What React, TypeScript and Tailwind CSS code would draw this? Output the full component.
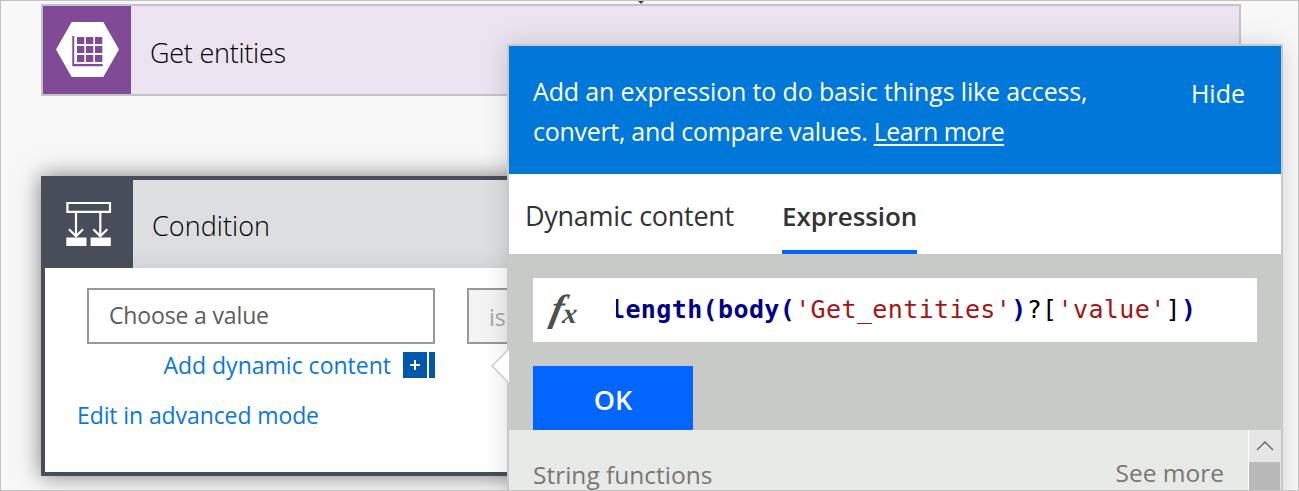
import React from "react";

function EntitiesIcon() {
  return (
    <svg width="88" height="88" viewBox="0 0 88 88" className="block shrink-0 bg-[#804a97]">
      <path d="M13 43.5 28.7 16H60.3L76 43.5 60.3 71H28.7Z" fill="#fff" />
      <path d="M29.3 30h1.9v28h28.5v2.2H29.3Z" fill="#804a97" />
      {[31, 40, 49].map((y) =>
        [34, 43, 52].map((x) => <rect key={`${x}-${y}`} x={x} y={y} width="7.3" height="7" fill="#804a97" />)
      )}
    </svg>
  );
}

function ConditionIcon() {
  return (
    <svg width="88" height="88" viewBox="0 0 88 88" fill="none" stroke="#fff" className="block shrink-0 bg-[#474e5a]">
      <path d="M22.4 23h42.6v8.9H22.4Z" strokeWidth="2.2" />
      <path d="M31 32v24M55.3 32v24M24 49.3l7 7 7-7M48.3 49.3l7 7 7-7" strokeWidth="2.2" />
      <path d="M21.3 57.5h20.2V66H21.3ZM45.6 57.5h20.2V66H45.6Z" fill="#fff" stroke="none" />
    </svg>
  );
}

function GetEntitiesCard() {
  return (
    <div className="flex h-[92px] w-[1200px] border-2 border-[#c4c4c4] bg-[#ebe3f0]">
      <EntitiesIcon />
      <div className="pt-[1px] pl-[19px] text-[27px] leading-[91px] font-[350] tracking-[-0.25px] text-black">Get entities</div>
    </div>
  );
}

function ConditionCard() {
  return (
    <div className="h-[300px] w-[1200px] border-4 border-[#474e5a] bg-white shadow-[0_0_22px_rgba(0,0,0,0.5)]">
      <div className="flex h-[88px] bg-linear-to-b from-[#dddee0] from-80% to-[#d3d4d6]">
        <ConditionIcon />
        <div className="pl-[19px] text-[27px] leading-[92px] font-[350] tracking-[0.05px] text-black">Condition</div>
      </div>
      <div className="flex gap-8 pt-5 pl-[42px]">
        <div className="w-[348px]">
          <div className="h-14 border-2 border-[#999] pl-5 text-[23px] leading-[51px] tracking-[-0.15px] text-[#5c5c5c]">Choose a value</div>
          <div className="flex items-center justify-end pt-2 text-[#0b78d8]">
            <span className="mr-[12px] text-[23px] leading-[26px]">Add dynamic content</span>
            <span className="mr-[2px] flex h-[26px] w-6 items-center justify-center bg-[#0058ad]">
              <svg width="12" height="12" viewBox="0 0 12 12" stroke="#fff" strokeWidth="2">
                <path d="M6 1v10M1 6h10" />
              </svg>
            </span>
            <span className="h-[26px] w-1.5 bg-[#0058ad]" />
          </div>
        </div>
        <div className="h-14 w-[300px] border-2 border-[#999] bg-[#f3f3f3] pl-5 text-[23px] leading-[55px] text-[#a6a6a6]">is equal to</div>
      </div>
      <div className="pt-[17px] pl-[32px] text-[23px] leading-10 tracking-[-0.1px] text-[#0b78d8]">Edit in advanced mode</div>
    </div>
  );
}

function ExpressionPanel() {
  return (
    <div className="absolute top-[43px] left-[506px] h-[460px] w-[776px] border-2 border-[#c8c8c8] bg-white shadow-[0_0_24px_rgba(0,0,0,0.15)]">
      <svg width="19" height="36" viewBox="0 0 19 36" className="absolute top-[302px] left-[-18px]">
        <path d="M18 1 1 18l17 17Z" fill="#fff" />
        <path d="M17 2 1 18l16 16" fill="none" stroke="#c8c8c8" strokeWidth="1.4" />
      </svg>
      <div className="flex h-32 justify-between bg-[#0078d9] pt-[25px] pr-[36px] pl-6 text-[25px] leading-10 text-white">
        <p className="w-[600px] tracking-[-0.15px]">
          Add an expression to do basic things like access,
          <br />
          <span className="tracking-[-0.29px]">
            convert, and compare values. <a className="tracking-[-0.5px] underline decoration-2 underline-offset-[3px]">Learn more</a>
          </span>
        </p>
        <span className="pt-[2px]">Hide</span>
      </div>
      <div className="flex h-20 gap-[48px] pl-4 text-[27px] leading-[84px] text-[#333]">
        <span className="w-[209px] tracking-[-0.28px] whitespace-nowrap">Dynamic content</span>
        <span className="h-20 w-[135px] border-b-4 border-[#0066ff] text-[26px] font-semibold tracking-[-0.1px]">Expression</span>
      </div>
      <div className="h-44 bg-[#c8cac7] px-6 pt-6">
        <div className="flex h-16 bg-white">
          <div className="flex w-[83px] pl-[18px] font-['Liberation_Serif'] font-bold text-[#4d4f4e] italic">
            <span className="w-[12px] -skew-x-12 text-[38px] leading-[60px]">f</span>
            <span className="w-4 -skew-x-6 text-[29px] leading-[70px]">x</span>
          </div>
          <div className="flex-1 overflow-hidden font-['DejaVu_Sans_Mono'] text-[25px] leading-[63px] tracking-[0.38px] whitespace-nowrap">
            <div className="-ml-1.5">
              <span className="font-bold text-[#000088]">length(body(</span>
              <span className="text-[#a31515]">'Get_entities'</span>
              <span className="font-bold text-[#000088]">)</span>
              <span className="text-black">?[</span>
              <span className="text-[#a31515]">'value'</span>
              <span className="text-black">]</span>
              <span className="font-bold text-[#000088]">)</span>
            </div>
          </div>
        </div>
        <button className="mt-6 block h-16 w-40 bg-[#0066ff] text-[27px] leading-[68px] font-semibold text-white">OK</button>
      </div>
      <div className="flex h-[80px] bg-[#e8eae7]">
        <div className="flex flex-1 justify-between pr-6 pl-6 text-[24.5px] leading-10 text-[#7a7673]">
          <span className="pt-[25px]">String functions</span>
          <span className="pt-[23px]">See more</span>
        </div>
        <div className="w-[33px] border-l border-white bg-[#e6e6e6]">
          <div className="flex h-8 items-center justify-center pr-[1px]">
            <svg width="18" height="12" viewBox="0 0 18 12" fill="none" stroke="#666" strokeWidth="1.4">
              <path d="m1 10 8-8 8 8" />
            </svg>
          </div>
          <div className="mr-px h-12 bg-[#b9b9b9]" />
        </div>
      </div>
    </div>
  );
}

export default function App() {
  return (
    <div className="relative h-[491px] w-[1299px] overflow-hidden border border-[#c3c3c3] bg-[#f8f8f8] font-['Open_Sans',sans-serif]">
      <svg width="6" height="3" viewBox="0 0 6 3" className="absolute top-0 left-[637px]">
        <path d="M0 0h6L3 3Z" fill="#444" />
      </svg>
      <div className="flex flex-col gap-20 pt-[3px] pl-10">
        <GetEntitiesCard />
        <ConditionCard />
      </div>
      <ExpressionPanel />
    </div>
  );
}
